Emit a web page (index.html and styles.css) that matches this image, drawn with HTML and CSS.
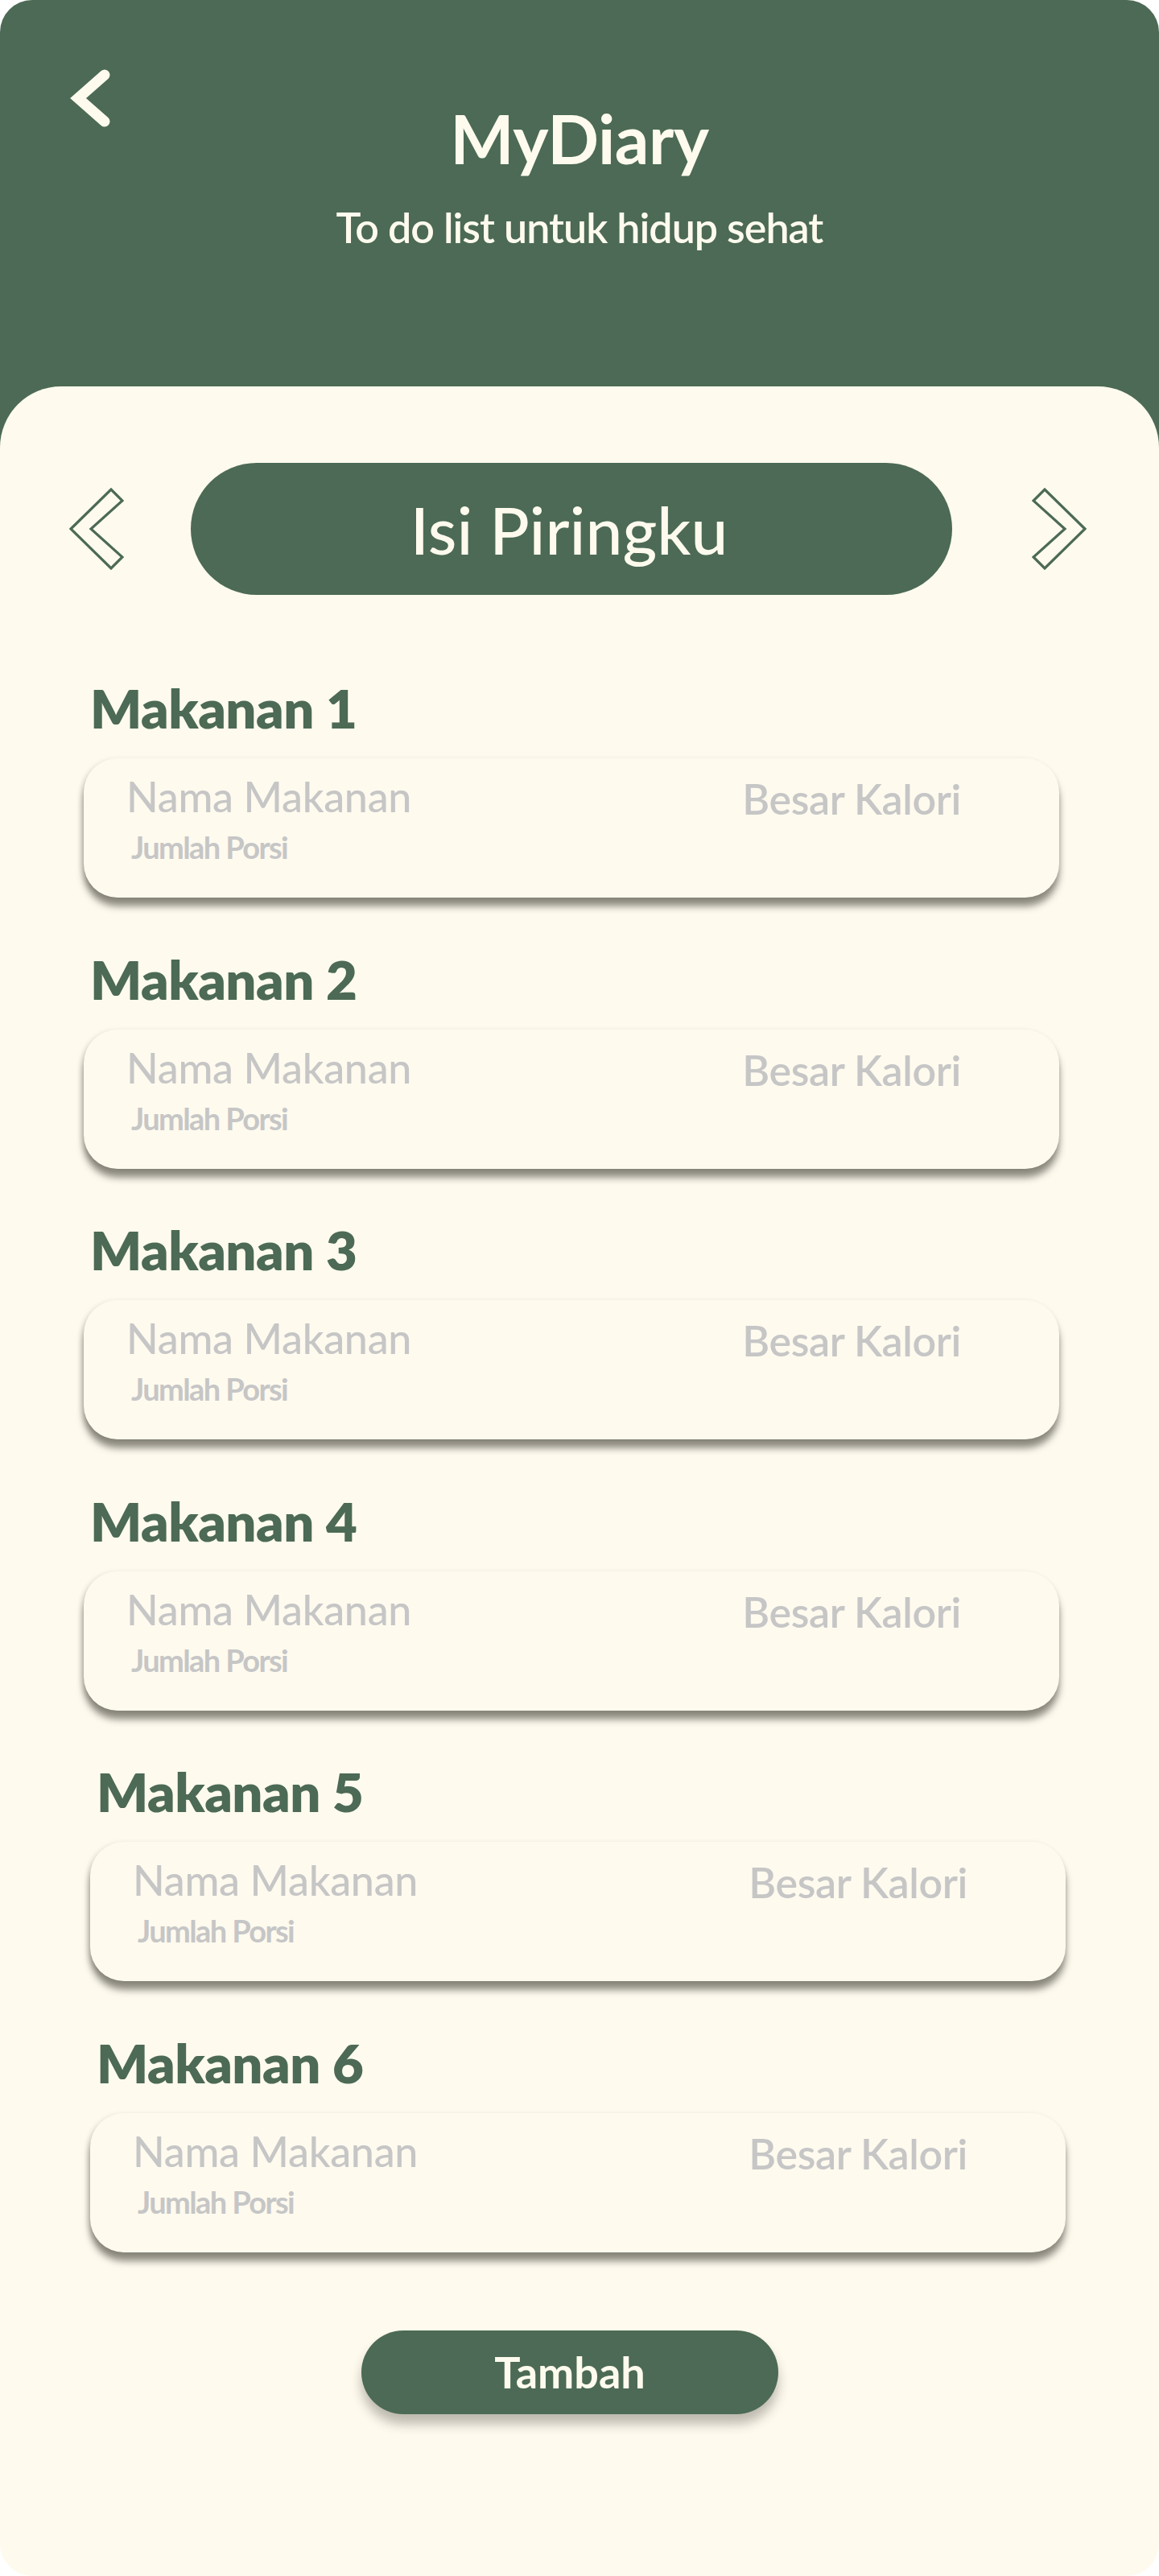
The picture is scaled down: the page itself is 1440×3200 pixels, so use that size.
FILE: index.html
```html
<!DOCTYPE html>
<html lang="id">
<head>
<meta charset="utf-8">
<title>MyDiary - Isi Piringku</title>
<link rel="stylesheet" href="styles.css">
</head>
<body>
<div class="screen">
  <header class="header">
    <a class="back" href="#" aria-label="Kembali">
      <svg width="60" height="80" viewBox="0 0 60 80"><path d="M44 9 L11 38 L44 67" fill="none" stroke="#FEFAEE" stroke-width="13" stroke-linejoin="miter" stroke-linecap="round"/></svg>
    </a>
    <div class="titles">
      <h1 class="title">MyDiary</h1>
      <p class="subtitle">To do list untuk hidup sehat</p>
    </div>
  </header>

  <main class="panel">
    <div class="nav">
      <button class="arrow arrow-left" aria-label="Sebelumnya">
        <svg width="68" height="102" viewBox="0 0 68 102"><polygon points="2,51 52,2 66,16 27,51 66,86 52,100" fill="none" stroke="#4C6A55" stroke-width="3.2" stroke-linejoin="miter"/></svg>
      </button>
      <div class="pill">Isi Piringku</div>
      <button class="arrow arrow-right" aria-label="Berikutnya">
        <svg width="68" height="102" viewBox="0 0 68 102"><polygon points="66,51 16,2 2,16 41,51 2,86 16,100" fill="none" stroke="#4C6A55" stroke-width="3.2" stroke-linejoin="miter"/></svg>
      </button>
    </div>

    <div class="list">
      <section class="item">
        <h2 class="item-title">Makanan 1</h2>
        <div class="card">
          <div class="card-left"><div class="food">Nama Makanan</div><div class="portion">Jumlah Porsi</div></div>
          <div class="kcal">Besar Kalori</div>
        </div>
      </section>
      <section class="item">
        <h2 class="item-title">Makanan 2</h2>
        <div class="card">
          <div class="card-left"><div class="food">Nama Makanan</div><div class="portion">Jumlah Porsi</div></div>
          <div class="kcal">Besar Kalori</div>
        </div>
      </section>
      <section class="item">
        <h2 class="item-title">Makanan 3</h2>
        <div class="card">
          <div class="card-left"><div class="food">Nama Makanan</div><div class="portion">Jumlah Porsi</div></div>
          <div class="kcal">Besar Kalori</div>
        </div>
      </section>
      <section class="item">
        <h2 class="item-title">Makanan 4</h2>
        <div class="card">
          <div class="card-left"><div class="food">Nama Makanan</div><div class="portion">Jumlah Porsi</div></div>
          <div class="kcal">Besar Kalori</div>
        </div>
      </section>
      <section class="item item-shift">
        <h2 class="item-title">Makanan 5</h2>
        <div class="card">
          <div class="card-left"><div class="food">Nama Makanan</div><div class="portion">Jumlah Porsi</div></div>
          <div class="kcal">Besar Kalori</div>
        </div>
      </section>
      <section class="item item-shift">
        <h2 class="item-title">Makanan 6</h2>
        <div class="card">
          <div class="card-left"><div class="food">Nama Makanan</div><div class="portion">Jumlah Porsi</div></div>
          <div class="kcal">Besar Kalori</div>
        </div>
      </section>
    </div>

    <div class="actions">
      <button class="add">Tambah</button>
    </div>
  </main>
</div>
</body>
</html>
```

FILE: styles.css
```css
* { box-sizing: border-box; }

html, body {
  margin: 0;
  padding: 0;
  background: #ffffff;
}

body {
  font-family: "Lato", "Noto Sans", sans-serif;
  width: 1440px;
}

.screen {
  width: 1440px;
  height: 3200px;
  display: flex;
  flex-direction: column;
}

.header {
  background: #4C6A55;
  border-radius: 40px 40px 0 0;
  height: 560px;
  display: grid;
  grid-template-columns: 1fr auto 1fr;
  align-items: start;
  padding-top: 84px;
}

.back {
  display: block;
  width: 60px;
  height: 80px;
  margin-left: 86px;
}
.back svg { display: block; }

.titles {
  text-align: center;
  color: #FEFAEE;
  padding-top: 46px;
}

.title {
  margin: 0;
  font-size: 84px;
  line-height: 1;
  font-weight: 700;
  letter-spacing: -0.5px;
}

.subtitle {
  margin: 42px 0 0;
  font-size: 52px;
  line-height: 1;
  font-weight: 600;
  letter-spacing: -1px;
}

.panel {
  background: #FEFAEE;
  margin-top: -80px;
  flex: 1;
  border-radius: 76px 76px 40px 40px;
  padding-top: 95px;
}

.nav {
  display: flex;
  align-items: center;
  padding-left: 86px;
}

.arrow {
  border: 0;
  background: none;
  padding: 0;
  width: 68px;
  height: 102px;
  cursor: pointer;
}
.arrow svg { display: block; }

.arrow-left { margin-right: 83px; }
.arrow-right { margin-left: 99px; }

.pill {
  width: 946px;
  height: 164px;
  border-radius: 82px;
  background: #4C6A55;
  color: #FEFAEE;
  display: flex;
  align-items: center;
  justify-content: center;
  font-size: 82px;
  font-weight: 500;
  padding-right: 6px;
}

.list {
  display: flex;
  flex-direction: column;
  gap: 68.5px;
  margin-top: 108px;
}

.item {
  padding-left: 104px;
  width: 1316px;
}

.item-shift {
  padding-left: 112px;
  width: 1324px;
}

.item-title {
  margin: 0 0 30px 8px;
  font-size: 67px;
  line-height: 65px;
  font-weight: 800;
  color: #4C6A55;
  letter-spacing: -0.5px;
}

.card {
  height: 173px;
  background: #FEFAEE;
  border-radius: 42px;
  box-shadow: 0 11px 9px rgba(40, 38, 30, 0.5), -2px 2px 6px rgba(40, 38, 30, 0.15);
  display: flex;
  justify-content: space-between;
  align-items: flex-start;
  padding: 21px 122px 0 53px;
  color: #C6C6C6;
}

.food {
  font-size: 52px;
  line-height: 1;
  font-weight: 500;
  letter-spacing: -0.3px;
}

.portion {
  margin: 18px 0 0 6px;
  font-size: 38px;
  line-height: 1;
  font-weight: 700;
  letter-spacing: -1.6px;
}

.kcal {
  margin-top: 3px;
  font-size: 52px;
  line-height: 1;
  font-weight: 600;
  letter-spacing: -0.4px;
}

.actions {
  display: flex;
  justify-content: center;
  margin-top: 97px;
}

.add {
  width: 518px;
  height: 104px;
  margin-left: -24px;
  border: 0;
  border-radius: 52px;
  background: #4C6A55;
  color: #FEFAEE;
  font-family: "Lato", "Noto Sans", sans-serif;
  font-size: 54px;
  font-weight: 700;
  box-shadow: 0 12px 14px rgba(40, 38, 30, 0.3);
  cursor: pointer;
}
```
